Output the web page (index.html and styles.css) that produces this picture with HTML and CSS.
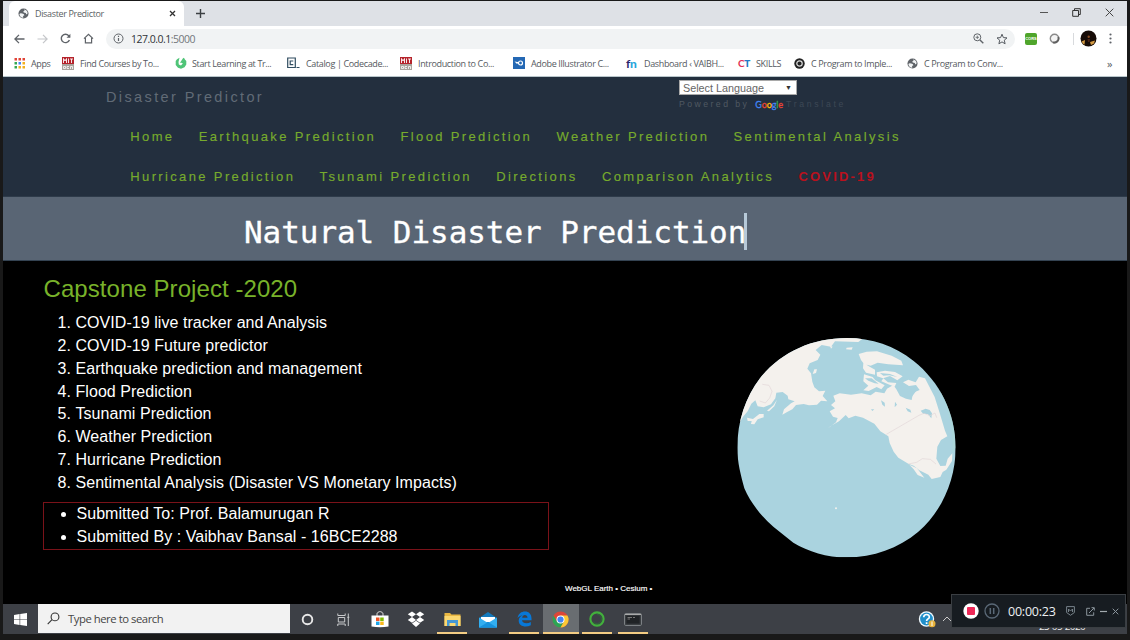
FILE: index.html
```html
<!DOCTYPE html>
<html lang="en">
<head>
<meta charset="utf-8">
<title>Disaster Predictor</title>
<link rel="stylesheet" href="styles.css">
</head>
<body>
<svg class="defs" width="0" height="0">
  <symbol id="globe" viewBox="0 0 12 12"><circle cx="6" cy="6" r="5.500" fill="#5f6368"/><path d="M1.500 6.500C3 5 4.500 6.500 6.200 6.500L7 8 5.500 8.700 5.800 10.500C3.500 10.500 1.700 8.800 1.500 6.500ZM6.500 1.500C9 1.600 10.600 3.700 10.500 6L9 7 8.500 5.500 6.200 5 5.800 3.500 7.200 3Z" fill="#f1f3f4"/></symbol>
  <symbol id="mit" viewBox="0 0 12 13"><rect width="12" height="7" fill="#b5232b"/><path d="M1.500 6V1.500L3 4 4.500 1.500V6M6.500 1.500V6M8 2H11M9.500 2V6" fill="none" stroke="#fff" stroke-width=".9"/><rect y="7" width="12" height="6" fill="#a9a49d"/><path d="M1.500 9.500h2v2h-2zM7 9.500H5v2H7M8.500 12V9.500h2V12" fill="none" stroke="#fff" stroke-width=".8"/></symbol>
</svg>
<div class="window">
  <header class="tabstrip">
    <div class="tab">
      <svg class="fav" width="11" height="11"><use href="#globe"/></svg>
      <span class="tab-title">Disaster Predictor</span>
      <svg class="tab-close" width="7" height="7" viewBox="0 0 7 7"><path d="M1 1 6 6M6 1 1 6" stroke="#333" stroke-width="1.300"/></svg>
    </div>
    <svg class="new-tab" width="9" height="9" viewBox="0 0 9 9"><path d="M4.500 0V9M0 4.500H9" stroke="#3c4043" stroke-width="1.400"/></svg>
    <div class="controls">
      <svg width="8" height="9" viewBox="0 0 8 9"><path d="M0 4.500H8" stroke="#555"/></svg>
      <svg width="9" height="9" viewBox="0 0 9 9" fill="none" stroke="#333"><path d="M.7 2.500H6.500V8.300H.7ZM2.500 2.500V.7H8.300V6.500H6.500"/></svg>
      <svg width="9" height="9" viewBox="0 0 9 9"><path d="M.7.7 8.300 8.300M8.300.7.7 8.300" stroke="#444"/></svg>
    </div>
  </header>

  <div class="toolbar">
    <div class="nav-icons">
      <svg width="11" height="10" viewBox="0 0 11 10" fill="none" stroke="#5f6368" stroke-width="1.300"><path d="M10.500 5H1.200M5 .9.9 5 5 9.100"/></svg>
      <svg width="11" height="10" viewBox="0 0 11 10" fill="none" stroke="#c4c6c9" stroke-width="1.200"><path d="M.5 5H9.800M6 .9 10.100 5 6 9.100"/></svg>
      <svg width="11" height="11" viewBox="0 0 11 11" fill="none" stroke="#5f6368" stroke-width="1.400"><path d="M9.400 7A4.200 4.200 0 1 1 8.700 2.700L9.700 4"/><path d="M10.400.8V4.700H6.500Z" fill="#5f6368" stroke="none"/></svg>
      <svg width="11" height="11" viewBox="0 0 11 11" fill="none" stroke="#5f6368" stroke-width="1.200"><path d="M1 5.600 5.500 1.300 10 5.600M2.400 5V9.800H8.600V5"/></svg>
    </div>
    <div class="omnibox">
      <svg width="11" height="11" viewBox="0 0 11 11"><circle cx="5.500" cy="5.500" r="4.500" fill="none" stroke="#5f6368"/><path d="M5.500 5V8M5.500 2.700V3.900" stroke="#5f6368" stroke-width="1.200"/></svg>
      <span class="url">127.0.0.1<i>:5000</i></span>
      <svg width="11" height="11" viewBox="0 0 11 11" fill="none" stroke="#5f6368"><circle cx="4.300" cy="4.300" r="3.500"/><path d="M7 7 10.300 10.300" stroke-width="1.400"/><path d="M2.600 4.300H6M4.300 2.600V6" stroke-width=".8"/></svg>
      <svg width="12" height="12" viewBox="0 0 12 12"><path d="M6 1.200 7.400 4.600 11 4.900 8.300 7.200 9.100 10.800 6 8.900 2.900 10.800 3.700 7.200 1 4.900 4.600 4.600Z" fill="none" stroke="#555a60"/></svg>
    </div>
    <div class="extensions">
      <span class="cors">CORS</span>
      <svg width="11" height="11" viewBox="0 0 11 11"><circle cx="5.500" cy="5.500" r="4.200" fill="#f4f4f4" stroke="#8a8a8a" stroke-width="1.400"/><path d="M9.300 4A4.200 4.200 0 0 1 4 9.300" fill="none" stroke="#606060" stroke-width="1.900"/></svg>
      <span class="divider"></span>
      <svg width="17" height="17" viewBox="0 0 17 17"><circle cx="8.500" cy="8.500" r="8" fill="#160b06"/><path d="M1.500 11.500 5 10 4.500 14.500 3.500 14.300ZM10 12 15 10.500 14 13.500 11 15Z" fill="#d39a42"/><circle cx="8.700" cy="6.800" r="1.200" fill="#874b23"/><path d="M7.500 9H10L9.500 12H8Z" fill="#4c2415"/></svg>
      <svg width="3" height="11" viewBox="0 0 3 11" fill="#5f6368"><circle cx="1.500" cy="1.500" r="1.100"/><circle cx="1.500" cy="5.500" r="1.100"/><circle cx="1.500" cy="9.500" r="1.100"/></svg>
    </div>
  </div>

  <nav class="bookmarks">
    <a class="bm bm-apps"><svg width="11" height="11" viewBox="0 0 11 11"><path d="M.5 0h2.500v2.500H.5zM4.500 0H7v2.500H4.500zM8.500 0H11v2.500H8.500z" fill="#e04438"/><path d="M.5 4h2.500v2.500H.5z" fill="#34a853"/><path d="M4.500 4H7v2.500H4.500z" fill="#4285f4"/><path d="M8.500 4H11v2.500H8.500zM4.500 8H7v2.500H4.500zM8.500 8H11v2.500H8.500z" fill="#f2b01e"/><path d="M.5 8h2.500v2.500H.5z" fill="#34a853"/></svg>Apps</a>
    <a class="bm bm-find"><svg width="12" height="13"><use href="#mit"/></svg>Find Courses by To...</a>
    <a class="bm bm-start"><svg width="12" height="12" viewBox="0 0 12 12"><path d="M4.500.8 2 2.200.7 4V8L3 10.800 6 11.700 9.500 10.200 11.300 7.500V4L9.500 2 6.200 5.300 7.800 6.500 6 8.500 3.800 7.500 3.500 5Z" fill="#4fc477"/><path d="M8.300.8 5.200 5.500 6 6.300 10 2Z" fill="#4fc477"/></svg>Start Learning at Tr...</a>
    <a class="bm bm-wide"><svg width="13" height="12" viewBox="0 0 13 12" fill="none" stroke="#304d60" stroke-width="1.200"><path d="M.7 1H8.300V10.500H.7ZM6.300 4H3.200V7.600H6.300M9.500 10.500H12.500"/></svg>Catalog | Codecade...</a>
    <a class="bm bm-wide"><svg width="12" height="13"><use href="#mit"/></svg>Introduction to Co...</a>
    <a class="bm bm-wide"><svg width="12" height="12" viewBox="0 0 12 12"><rect width="12" height="12" fill="#2468b4"/><path d="M1.500 4.500 6 5.200 4 7Z" fill="#fff"/><circle cx="7.500" cy="6" r="2" fill="#2468b4" stroke="#fff" stroke-width="1.200"/></svg>Adobe Illustrator C...</a>
    <a class="bm bm-dash"><span class="fn">f<b>n</b></span>Dashboard ‹ VAIBH...</a>
    <a class="bm bm-skills"><span class="ct">C<b>T</b></span>SKILLS</a>
    <a class="bm bm-c"><svg width="11" height="11" viewBox="0 0 11 11"><circle cx="5.500" cy="5.500" r="5.200" fill="#222"/><circle cx="5.500" cy="5.500" r="2.700" fill="none" stroke="#ddd" stroke-width="1.200"/></svg>C Program to Imple...</a>
    <a class="bm bm-conv"><svg width="11" height="11"><use href="#globe"/></svg>C Program to Conv...</a>
    <span class="more">»</span>
  </nav>

  <section class="site-nav">
    <div class="brand-row">
      <span class="brand">Disaster Predictor</span>
      <div class="translate">
        <div class="select"><span>Select Language</span><span class="arrow">▼</span></div>
        <div class="powered">Powered by <span class="google"><i class="b">G</i><i class="r">o</i><i class="y">o</i><i class="b">g</i><i class="g">l</i><i class="r">e</i></span><span class="tr">Translate</span></div>
      </div>
    </div>
    <div class="links"><a>Home</a><a>Earthquake Prediction</a><a>Flood Prediction</a><a>Weather Prediction</a><a>Sentimental Analysis</a></div>
    <div class="links"><a>Hurricane Prediction</a><a>Tsunami Prediction</a><a>Directions</a><a>Comparison Analytics</a><a class="covid">COVID-19</a></div>
  </section>

  <section class="banner"><h1>Natural Disaster Prediction</h1><span class="caret"></span></section>

  <main class="content">
    <div class="project">
      <h2>Capstone Project -2020</h2>
      <ol>
        <li>COVID-19 live tracker and Analysis</li>
        <li>COVID-19 Future predictor</li>
        <li>Earthquake prediction and management</li>
        <li>Flood Prediction</li>
        <li>Tsunami Prediction</li>
        <li>Weather Prediction</li>
        <li>Hurricane Prediction</li>
        <li>Sentimental Analysis (Disaster VS Monetary Impacts)</li>
      </ol>
      <ul>
        <li>Submitted To: Prof. Balamurugan R</li>
        <li>Submitted By : Vaibhav Bansal - 16BCE2288</li>
      </ul>
    </div>
    <div class="earth">
      <svg width="240" height="235" viewBox="0 0 720 705">
        <clipPath id="disc"><path d="M365 24C440 24 510 48 565 92C645 155 692 250 692 353C692 450 650 545 580 605C520 655 445 682 365 682C305 682 250 665 205 638L145 590C105 555 75 515 58 475C48 435 37 400 37 353C37 275 62 200 105 145C165 68 260 24 365 24Z"/></clipPath>
        <g clip-path="url(#disc)">
          <rect width="720" height="705" fill="#aad3df"/>
          <g fill="#f4f1ed">
            <path d="M20 320 20 20H420L400 36 330 34 318 50 290 45 272 60 286 74 278 90 254 100 247 116 258 130 262 155 268 172 282 184 301 182 293 198 307 214 288 212 276 224 252 226 236 222 213 225 202 238 185 247 172 254 177 238 198 220 209 214 190 208 188 197 173 186 154 188 151 205 138 223 116 232 98 229 91 211 79 221 68 244 54 260Z"/>
            <path d="M66 263 84 267 103 252 116 252 116 262 98 268 88 283 78 282 80 273 68 273ZM126 242 145 226 156 209 148 229 132 244ZM268 118 276 118 273 129 263 132ZM365 53 383 52 380 59 363 58ZM315 47 323 50 318 56Z"/>
            <path d="M325 197 344 190 378 194 410 190 437 196 452 185 478 190 486 176 505 165 514 178 525 198 543 206 560 210 564 188 584 180 573 165 552 168 534 157 550 149 572 157 582 140 600 145 629 201 645 252 660 302 667 319 648 330 637 350 634 386 646 408 662 407 668 386 682 370 681 393 664 419 653 426 646 441 620 447 610 434 583 421 566 407 550 401 520 383 506 365 494 339 490 319 466 304 448 281 414 263 391 257 371 265 362 255 342 274 316 289 309 295 333 277 338 264 324 260 314 244 330 235 318 225 331 214Z"/>
            <path d="M401 72 425 65 456 64 500 77 529 92 534 106 490 103 458 98 437 107 417 102 408 90ZM415 98 434 110 450 119 450 134 423 128 414 115ZM417 133 443 141 451 151 479 166 469 178 455 171 431 183 415 181 430 167 415 154ZM455 127 480 122 510 126 533 139 517 151 495 138 474 145 456 139ZM475 145 489 157 514 159 509 170 490 163 469 154Z"/>
            <path d="M553 404 576 415 598 443 578 435 566 418Z"/><circle cx="333" cy="535" r="3"/>
          </g>
          <g fill="#aad3df"><path d="M468 211 479 218 480 230 472 224ZM510 215 516 224 509 232ZM542 233 556 239 559 248 548 244ZM587 242 602 236 614 240 621 250 619 265 608 252 595 252ZM438 238 448 238 442 243ZM547 185 570 172 574 182 558 204Z"/><path d="M420 145H440L461 161 449 160 430 152ZM465 129 495 132 517 141 493 136 475 137Z"/></g>
          <g fill="none" stroke="#e3d7d8" stroke-width="2"><path d="M484 313 582 256 597 250 615 257 630 249 635 263M550 402 575 397 592 386 616 388 633 402M104 213 121 219 134 204 141 184 132 166 112 163"/></g>
          <path d="M582 100Q690 205 682 370L700 340V90Z" fill="#abd8d7" opacity=".6"/>
        </g>
      </svg>
    </div>
    <p class="credit">WebGL Earth • Cesium •</p>
  </main>

  <footer class="taskbar">
    <span class="start"><svg width="13" height="13" viewBox="0 0 13 13" fill="#fff"><path d="M0 1.900 5.600 1.100V6.200H0ZM6.200 1 13 0V6.200H6.200ZM0 6.800H5.600V11.900L0 11.100ZM6.200 6.800H13V13L6.200 12Z"/></svg></span>
    <div class="search"><svg width="13" height="13" viewBox="0 0 13 13" fill="none" stroke="#333" stroke-width="1.100"><circle cx="8" cy="4.900" r="3.900"/><path d="M5 7.700.7 12.200"/></svg><span>Type here to search</span></div>
    <div class="apps">
      <span><svg width="13" height="13" viewBox="0 0 13 13"><circle cx="6.500" cy="6.500" r="4.800" fill="none" stroke="#e8e8e8" stroke-width="1.900"/></svg></span>
      <span><svg width="13" height="13" viewBox="0 0 13 13" fill="none" stroke="#c9cacc"><path d="M.8.500V2.500H8.200V.5M1.300 4.500H7.700V9H1.300ZM.8 13V11H8.200V13M11.300.5V13M10.300 4.300H12.300"/></svg></span>
      <span><svg width="18" height="18" viewBox="0 0 18 18"><path d="M6 6V3.500Q9-.5 12 3.500V6" fill="none" stroke="#bbb" stroke-width="1.200"/><path d="M.5 5.500H17.500V16.500Q9 18 .5 16.500Z" fill="#fff"/><path d="M5 7.500H8.500V11H5Z" fill="#f05325"/><path d="M9.200 7.500h3.500V11H9.200z" fill="#7fb900"/><path d="M5 11.600H8.500V15H5Z" fill="#1ea5e8"/><path d="M9.200 11.600h3.500V15H9.200z" fill="#fab81b"/></svg></span>
      <span><svg width="18" height="17" viewBox="0 0 18 17" fill="#fff"><path d="M5 .5 9 3.200 5 6 .8 3.200ZM13 .5 17.200 3.200 13 6 9 3.200ZM5 6 9 8.900 5 11.700.8 8.900ZM13 6 17.200 8.900 13 11.700 9 8.900ZM9 9.800 13 12.600 9 16 5 12.600Z"/></svg></span>
      <span class="open"><svg width="17" height="15" viewBox="0 0 17 15"><path d="M.5 1H6L7.500 2.500H16.500V14H.5Z" fill="#e9b742"/><path d="M.5 4H16.500V14H.5Z" fill="#fbd871"/><path d="M3 8H14V14H11.500V11H5.500V14H3Z" fill="#4698d4"/></svg></span>
      <span><svg width="18" height="17" viewBox="0 0 18 17"><path d="M0 7 9 1 18 7V16.500H0Z" fill="#1279bd"/><path d="M2 6H16V11H2Z" fill="#fff"/><path d="M0 6.500 9 12 18 6.500V16.500H0Z" fill="#32aef0"/><path d="M0 16.500 9 11 18 16.500Z" fill="#1692dd"/></svg></span>
      <span class="open"><svg width="15" height="16" viewBox="0 0 15 16"><path d="M.5 7C1.500 2.500 4.500.5 8 .5 12 .5 14.500 3.200 14.500 7.500V9.200H5C5.300 12.500 10.500 13 13.800 11V14.300C8 17 1.500 15 1.700 9.500 1.800 6.500 4 4.800 6 4.300 3.500 4.500 1.700 5.600.5 7ZM5.200 6.800H10.500C10.500 3.200 5.400 3.200 5.200 6.800Z" fill="#0878d7"/></svg></span>
      <span class="open active"><svg width="17" height="17" viewBox="0 0 17 17"><circle cx="8.500" cy="8.500" r="8" fill="#dd4638"/><path d="M1.570 4.500A8 8 0 0 0 8.500 16.500L12 10.500 8.500 12.500 5 10.500Z" fill="#2ca456"/><path d="M15.430 4.500A8 8 0 0 1 8.500 16.500L12 10.500 12 6.500 8.500 4.500Z" fill="#fcc934"/><circle cx="8.500" cy="8.500" r="4" fill="#fff"/><circle cx="8.500" cy="8.500" r="3.100" fill="#4285f4"/></svg></span>
      <span class="open"><svg width="16" height="16" viewBox="0 0 16 16"><circle cx="8" cy="8" r="6.600" fill="none" stroke="#42b13c" stroke-width="2.100"/><path d="M8 3.300A4.700 4.700 0 1 1 4.300 11" fill="none" stroke="#287733" stroke-width=".7"/></svg></span>
      <span class="open"><svg width="18" height="13" viewBox="0 0 18 13"><rect x=".6" y=".6" width="16.800" height="11.800" rx="1" fill="#33373a" stroke="#85898c"/><path d="M1 1.500H17" stroke="#aaa"/><path d="M2.500 3H15.500V10.500H2.500Z" fill="#202326"/><path d="M3.500 4.500H8M3.500 6H6M9 4.500H11" stroke="#777"/></svg></span>
    </div>
    <div class="tray">
      <svg width="18" height="17" viewBox="0 0 18 17"><circle cx="8.500" cy="8" r="7.700" fill="#f2faff"/><circle cx="8.500" cy="8" r="6.400" fill="#218fca"/><path d="M5.700 6.300C5.700 2.500 11.500 2.600 11.300 6.200 11.200 8 8.600 7.900 8.600 10M8.600 11.300V13" fill="none" stroke="#fff" stroke-width="1.700"/><circle cx="14" cy="12.700" r="3.500" fill="#e7b23b"/><path d="M14 10.500V15" stroke="#fff"/></svg>
      <svg width="10" height="6" viewBox="0 0 10 6"><path d="M1 5 5 1 9 5" fill="none" stroke="#ccc"/></svg>
    </div>
    <div class="date">23-05-2020</div>
  </footer>
</div>

<aside class="recorder">
  <svg width="16" height="16" viewBox="0 0 16 16"><circle cx="8" cy="8" r="7.700" fill="#fff"/><rect x="4" y="4" width="8" height="8" rx="1" fill="#ee2957"/></svg>
  <svg width="16" height="16" viewBox="0 0 16 16" fill="none" stroke="#5a6876"><circle cx="8" cy="8" r="7" stroke-width="1.300"/><path d="M6.300 5V11M9.700 5V11" stroke-width="1.500"/></svg>
  <span class="time">00:00:23</span>
  <svg class="mark" width="9" height="10" viewBox="0 0 9 10" fill="none" stroke="#77828a"><path d="M.6.6H8.400V6.500L4.500 9.300.6 6.500ZM2.500 6V3L4.500 5 6.500 3V6"/></svg>
  <svg width="9" height="9" viewBox="0 0 9 9" fill="none" stroke="#8a949c"><path d="M4 1.300H.7V8.300H7.700V5.300M3 6 8 1M5.500.7H8.300V3.500"/></svg>
  <svg width="7" height="9" viewBox="0 0 7 9"><path d="M0 4.500H7" stroke="#a2a9ae" stroke-width="1.200"/></svg>
  <svg width="7" height="7" viewBox="0 0 7 7"><path d="M.7.7 6.300 6.300M6.300.7.7 6.300" stroke="#8a949c"/></svg>
</aside>
</body>
</html>
```

FILE: styles.css
```css
* { box-sizing: border-box; }
body { margin: 0; width: 1130px; height: 640px; padding: 1px 3px 6px; overflow: hidden; background: #191919; font-family: "Liberation Sans", Arial, sans-serif; }
.defs { display: block; position: absolute; }
svg { display: block; flex: none; }
i { font-style: normal; }
.window { width: 1124px; height: 633px; display: flex; flex-direction: column; white-space: nowrap; }

.tabstrip { height: 25px; flex: none; background: #dee1e6; display: flex; align-items: center; }
.tab { width: 175px; height: 25px; margin-left: 6px; padding-left: 9px; background: #fff; border-radius: 6px 6px 0 0; display: flex; align-items: center; color: #5b5f64; font: 9px "Open Sans", sans-serif; letter-spacing: -0.35px; }
.tab-title { margin-left: 6px; flex: 1; }
.tab-close { margin-right: 8px; }
.new-tab { margin-left: 12px; }
.controls { margin-left: auto; padding-right: 13px; margin-top: -3px; display: flex; gap: 24px; align-items: center; }

.toolbar { height: 25px; flex: none; background: #fff; display: flex; align-items: center; }
.nav-icons { width: 103px; padding-left: 11px; display: flex; gap: 12px; align-items: center; }
.omnibox { width: 909px; height: 20px; border-radius: 10px; background: #f1f3f4; display: flex; align-items: center; padding: 0 7px; gap: 12px; }
.url { flex: 1; margin-left: -5px; color: #303337; font: 10.5px "Open Sans", sans-serif; letter-spacing: -0.5px; }
.url i { color: #73777b; }
.extensions { flex: 1; display: flex; align-items: center; justify-content: space-between; padding: 0 15px 0 10px; }
.extensions svg:nth-of-type(2) { margin-left: -6px; }
.cors { width: 12px; height: 12px; border-radius: 2px; background: #4fa52b; color: #fff; font: bold 4px/12px "Liberation Sans", sans-serif; text-align: center; }
.divider { width: 1px; height: 12px; background: #d8dadd; }

.bookmarks { height: 25px; flex: none; background: #fff; display: flex; align-items: center; padding: 0 0 1px 11px; color: #55595e; font: 9px "Open Sans", sans-serif; letter-spacing: -0.36px; }
.bm { display: flex; align-items: center; gap: 6px; flex: none; }
.bm-apps { width: 48px; }
.bm-find { width: 113px; }
.bm-start { width: 112px; gap: 5px; }
.bm-wide { width: 113px; }
.bm-dash { width: 112px; }
.bm-skills { width: 56px; }
.bm-c { width: 113px; }
.bm-conv { width: 195px; }
.fn, .ct { width: 12px; font: bold 12px "Lato", sans-serif; color: #29256c; }
.fn b { color: #28a6dc; }
.ct { font-size: 10px; color: #df3156; }
.ct b { color: #237bc4; }
.more { font-size: 11px; margin-left: 5px; }

.site-nav { height: 121px; flex: none; background: #232f3e; border-top: 1px solid #b9c6cb; border-bottom: 1px solid #2e3b4a; }
.brand-row { height: 39px; display: flex; padding-left: 103px; }
.brand { width: 573px; color: #616b76; font-size: 14.5px; line-height: 40px; letter-spacing: 2.38px; }
.select { width: 118px; height: 15px; margin-top: 3px; background: #fff; border: 1px solid #a9a9a9; padding: 0 4px 0 3px; display: flex; align-items: center; justify-content: space-between; color: #666; font-size: 10.8px; }
.arrow { font-size: 7px; color: #333; }
.powered { display: flex; align-items: center; height: 14px; margin-top: 2px; font-size: 8.700px; letter-spacing: 2.45px; color: #505962; white-space: pre; }
.google { font: 9px "Lato", sans-serif; letter-spacing: -.1px; margin: 0 3px 0 1px; -webkit-text-stroke: .3px; }
.tr { color: #3d4855; letter-spacing: 2.7px; }
.b { color: #4285f4; } .r { color: #ea4335; } .y { color: #fbbc05; } .g { color: #34a853; }
.links { height: 40px; padding-left: 115px; display: flex; align-items: center; font-size: 13px; letter-spacing: 2.36px; color: #77ab2d; -webkit-text-stroke: .15px; }
.links a { padding: 0 12px 0 12.3px; }
.links .covid { color: #b9111d; font-weight: bold; letter-spacing: 2.2px; -webkit-text-stroke: 0; }

.banner { height: 64px; flex: none; background: #596574; border-bottom: 1px solid #344352; display: flex; align-items: center; padding: 6px 0 0 241px; }
.banner h1 { margin: 0; width: 500px; color: #fff; font: 31px "DejaVu Sans Mono", monospace; letter-spacing: -.06px; -webkit-text-stroke: .3px; padding-top: 1px; }
.caret { width: 3px; height: 37px; background: #b7c9d8; }

.content { height: 343px; flex: none; background: #000; color: #fff; display: grid; grid-template-columns: 562px 1fr; grid-template-rows: 319px 24px; }
.project { padding: 14px 16px 0 40px; }
.project h2 { margin: 0; font-size: 24px; line-height: 28px; font-weight: normal; letter-spacing: .07px; color: #78b22a; padding-left: .5px; }
.project ol, .project ul { margin: 0; font-size: 16px; line-height: 22.860px; letter-spacing: .05px; }
.project ol { padding: 9px 0 0 32.500px; }
.project ul { margin-top: 7px; height: 48px; border: 1px solid #7a1219; padding: 0 0 0 32.500px; }
.earth { padding: 69px 0 0 160px; }
.credit { grid-column: 2; margin: 4px 0 0; font-size: 8px; line-height: 10px; letter-spacing: 0; -webkit-text-stroke: .15px; }

.taskbar { height: 30px; flex: none; background: #3d4046; display: flex; }
.start { width: 35px; display: flex; align-items: center; justify-content: center; }
.search { width: 252px; height: 29px; background: #f2f2f2; display: flex; align-items: center; padding-left: 9px; gap: 8px; color: #454545; font: 11.300px "Open Sans", sans-serif; letter-spacing: -.46px; }
.apps { display: flex; margin-left: -.8px; }
.apps span { width: 36.200px; display: flex; align-items: center; justify-content: center; }
.apps .open { background: linear-gradient(#f3cc83, #f3cc83) center bottom / 30px 2px no-repeat; }
.apps .active { background: linear-gradient(#f3cc83, #f3cc83) center bottom / 100% 2px no-repeat #696d71; }
.tray { display: flex; align-items: center; gap: 6px; margin-left: auto; width: 121px; }
.date { display: flex; align-items: flex-end; width: 88px; color: #e5e5e5; font: 10px/15px "Open Sans", sans-serif; letter-spacing: -.6px; }

.recorder { position: absolute; left: 951px; top: 594px; width: 175px; height: 34px; background: #171c21; border: 1px solid #3a3e42; display: flex; align-items: center; padding-left: 11px; gap: 5px; white-space: nowrap; }
.time { width: 54px; margin-left: 3px; color: #edf0f2; font: 12.500px "Open Sans", sans-serif; letter-spacing: -.22px; }
.recorder .mark { margin: 0 6px 0 -1px; }
```
